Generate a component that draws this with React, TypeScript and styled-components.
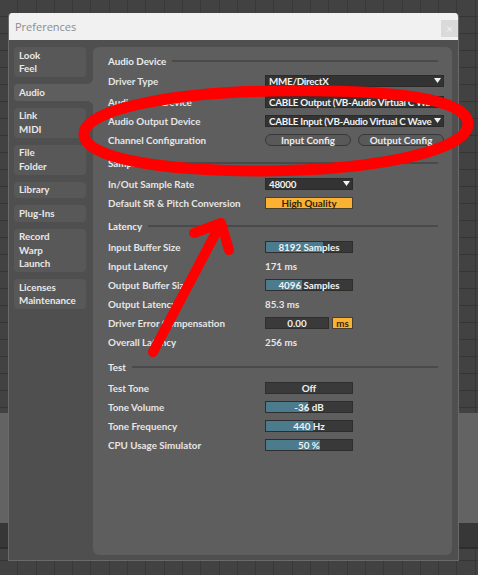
import React from "react";
import styled, { createGlobalStyle } from "styled-components";

const GlobalStyle = createGlobalStyle`
  html, body {
    margin: 0;
    padding: 0;
    background: #414141;
  }
  body {
    font-family: Lato, "DejaVu Sans", sans-serif;
  }
`;

const Desktop = styled.div`
  position: relative;
  width: 478px;
  height: 575px;
  overflow: hidden;
  box-sizing: border-box;
  padding: 13px 0 0 8px;
  background-color: #424242;
  background-image:
    linear-gradient(
      to bottom,
      transparent 413px,
      #636363 413px,
      #636363 523px,
      #373737 523px,
      #373737 547px,
      #2d2d2d 547px,
      #2d2d2d 549px,
      transparent 549px
    ),
    repeating-linear-gradient(to bottom, transparent 0 16px, #353535 16px 17px),
    repeating-linear-gradient(to right, transparent 0 17.3px, #383838 17.3px 18.3px);
`;

const Window = styled.div`
  width: 451px;
  height: 548px;
  box-sizing: border-box;
  display: flex;
  flex-direction: column;
  background: #4f4f4f;
  border: 1px solid #6a6a6a;
  border-top: none;
  border-radius: 4px 4px 0 0;
  overflow: hidden;
`;

const TitleBar = styled.div`
  height: 27px;
  flex: none;
  display: flex;
  align-items: flex-start;
  justify-content: space-between;
  background: #f1f1f1;
  padding-left: 6px;
`;

const Title = styled.span`
  margin-top: 6px;
  font-family: "Open Sans", "Liberation Sans", sans-serif;
  font-size: 11px;
  color: #8d8d8d;
`;

const CloseButton = styled.div`
  margin-top: 7px;
  width: 17px;
  height: 17px;
  display: flex;
  align-items: center;
  justify-content: center;
  background: #dadada;
  color: #f4f4f4;
  font-family: "DejaVu Sans", sans-serif;
  font-size: 9px;
`;

const Body = styled.div`
  flex: 1;
  display: flex;
  gap: 7px;
  padding: 7px 6px 5px 5px;
  min-height: 0;
`;

const Sidebar = styled.div`
  width: 72px;
  flex: none;
  display: flex;
  flex-direction: column;
  gap: 7px;
`;

const Tab = styled.div<{ $active?: boolean }>`
  position: relative;
  padding: 1.5px 5px;
  line-height: 13.5px;
  font-size: 9.8px;
  font-weight: 700;
  color: #e8e8e8;
  background: ${(p) => (p.$active ? "#5e5e5e" : "#585858")};
  border-radius: ${(p) => (p.$active ? "4px 0 0 4px" : "4px")};
  margin-right: ${(p) => (p.$active ? "-7px" : "0")};

  ${(p) =>
    p.$active &&
    `
    &::before, &::after {
      content: "";
      position: absolute;
      right: 0;
      width: 5px;
      height: 5px;
    }
    &::before {
      top: -5px;
      background: radial-gradient(circle at 0 0, transparent 4.5px, #5e5e5e 5px);
    }
    &::after {
      bottom: -5px;
      background: radial-gradient(circle at 0 100%, transparent 4.5px, #5e5e5e 5px);
    }
  `}
`;

const Panel = styled.div`
  flex: 1;
  display: flex;
  flex-direction: column;
  gap: 2px;
  background: #5e5e5e;
  border-radius: 6px;
  padding: 4px 8px 0 15px;
`;

const Section = styled.div<{ $extra?: number }>`
  display: flex;
  flex-direction: column;
  margin-top: ${(p) => p.$extra ?? 0}px;
`;

const SectionTitle = styled.div<{ $compact?: boolean }>`
  height: ${(p) => (p.$compact ? 20 : 23)}px;
  display: flex;
  align-items: center;
  gap: 6px;
  font-size: 9.8px;
  font-weight: 700;
  color: #ececec;

  &::after {
    content: "";
    flex: 1;
    height: 2px;
    margin-right: 6px;
    background: #4a4a4a;
  }
`;

const Row = styled.div<{ $spaced?: boolean }>`
  height: 19px;
  display: grid;
  grid-template-columns: 157px 1fr;
  align-items: center;
  margin-bottom: ${(p) => (p.$spaced ? 2 : 0)}px;
`;

const Label = styled.span`
  font-size: 9.8px;
  font-weight: 700;
  color: #e6e6e6;
  white-space: nowrap;
`;

const Controls = styled.div<{ $gap?: number }>`
  display: flex;
  gap: ${(p) => p.$gap ?? 7}px;
  align-items: center;
`;

const Select = styled.div<{ $width: number }>`
  width: ${(p) => p.$width}px;
  height: 12px;
  box-sizing: border-box;
  display: flex;
  align-items: center;
  gap: 2px;
  padding: 0 2px 0 3px;
  background: #333333;
  border: 1px solid #2b2b2b;
  font-size: 9.8px;
  font-weight: 700;
  color: #f2f2f2;
`;

const SelectText = styled.span`
  flex: 1;
  overflow: hidden;
  white-space: nowrap;
  letter-spacing: -0.25px;
`;

const Pill = styled.div`
  width: 86px;
  height: 12px;
  box-sizing: border-box;
  display: flex;
  align-items: center;
  justify-content: center;
  border: 1px solid #383838;
  border-radius: 6px;
  background: #595959;
  font-size: 9.8px;
  font-weight: 700;
  color: #ececec;
`;

const Field = styled.div<{ $width: number; $orange?: boolean }>`
  width: ${(p) => p.$width}px;
  height: 12px;
  box-sizing: border-box;
  display: flex;
  align-items: center;
  justify-content: center;
  border: 1px solid ${(p) => (p.$orange ? "#4a4030" : "#2e2e2e")};
  background: ${(p) => (p.$orange ? "#fbb131" : "#3a3a3a")};
  font-size: 9.8px;
  font-weight: 700;
  color: ${(p) => (p.$orange ? "#33260e" : "#f0f0f0")};
`;

const Slider = styled.div`
  width: 88px;
  height: 12px;
  box-sizing: border-box;
  display: flex;
  align-items: center;
  justify-content: center;
  border: 1px solid #2e2e2e;
  font-size: 9.8px;
  font-weight: 700;
  color: #f2f2f2;
`;

const Value = styled.span`
  font-size: 9.8px;
  font-weight: 700;
  color: #e6e6e6;
`;

const Annotation = styled.svg`
  position: absolute;
  left: 0;
  top: 0;
  pointer-events: none;
`;

const Arrow = () => (
  <svg width="7" height="5" viewBox="0 0 7 5">
    <path d="M0 0 H7 L3.5 5 Z" fill="#f4f4f4" />
  </svg>
);

const Dropdown: React.FC<{ width: number; text: string }> = ({ width, text }) => (
  <Select $width={width}>
    <SelectText>{text}</SelectText>
    <Arrow />
  </Select>
);

const Bar: React.FC<{ value: number; text: string }> = ({ value, text }) => (
  <Slider
    style={{
      background: `linear-gradient(to right, #4b7b8d ${value * 100}%, #393939 ${value * 100}%)`,
    }}
  >
    {text}
  </Slider>
);

const tabs: { lines: string[]; active?: boolean }[] = [
  { lines: ["Look", "Feel"] },
  { lines: ["Audio"], active: true },
  { lines: ["Link", "MIDI"] },
  { lines: ["File", "Folder"] },
  { lines: ["Library"] },
  { lines: ["Plug-Ins"] },
  { lines: ["Record", "Warp", "Launch"] },
  { lines: ["Licenses", "Maintenance"] },
];

export default function App() {
  return (
    <>
      <GlobalStyle />
      <Desktop>
        <Window>
          <TitleBar>
            <Title>Preferences</Title>
            <CloseButton>×</CloseButton>
          </TitleBar>
          <Body>
            <Sidebar>
              {tabs.map((t) => (
                <Tab key={t.lines[0]} $active={t.active}>
                  {t.lines.map((l) => (
                    <div key={l}>{l}</div>
                  ))}
                </Tab>
              ))}
            </Sidebar>
            <Panel>
              <Section>
                <SectionTitle $compact>Audio Device</SectionTitle>
                <Row $spaced>
                  <Label>Driver Type</Label>
                  <Dropdown width={179} text="MME/DirectX" />
                </Row>
                <Row>
                  <Label>Audio Input Device</Label>
                  <Dropdown width={179} text="CABLE Output (VB-Audio Virtual C Wa" />
                </Row>
                <Row>
                  <Label>Audio Output Device</Label>
                  <Dropdown width={179} text="CABLE Input (VB-Audio Virtual C Wave" />
                </Row>
                <Row>
                  <Label>Channel Configuration</Label>
                  <Controls>
                    <Pill>Input Config</Pill>
                    <Pill>Output Config</Pill>
                  </Controls>
                </Row>
              </Section>

              <Section>
                <SectionTitle>Sample Rate</SectionTitle>
                <Row>
                  <Label>In/Out Sample Rate</Label>
                  <Dropdown width={88} text="48000" />
                </Row>
                <Row>
                  <Label>Default SR &amp; Pitch Conversion</Label>
                  <Field $width={88} $orange>
                    High Quality
                  </Field>
                </Row>
              </Section>

              <Section>
                <SectionTitle>Latency</SectionTitle>
                <Row>
                  <Label>Input Buffer Size</Label>
                  <Bar value={0.66} text="8192 Samples" />
                </Row>
                <Row>
                  <Label>Input Latency</Label>
                  <Value>171 ms</Value>
                </Row>
                <Row>
                  <Label>Output Buffer Size</Label>
                  <Bar value={0.42} text="4096 Samples" />
                </Row>
                <Row>
                  <Label>Output Latency</Label>
                  <Value>85.3 ms</Value>
                </Row>
                <Row>
                  <Label>Driver Error Compensation</Label>
                  <Controls $gap={3}>
                    <Field $width={64}>0.00</Field>
                    <Field $width={21} $orange>
                      ms
                    </Field>
                  </Controls>
                </Row>
                <Row>
                  <Label>Overall Latency</Label>
                  <Value>256 ms</Value>
                </Row>
              </Section>

              <Section $extra={2}>
                <SectionTitle>Test</SectionTitle>
                <Row>
                  <Label>Test Tone</Label>
                  <Field $width={88}>Off</Field>
                </Row>
                <Row>
                  <Label>Tone Volume</Label>
                  <Bar value={0.49} text="-36 dB" />
                </Row>
                <Row>
                  <Label>Tone Frequency</Label>
                  <Bar value={0.55} text="440 Hz" />
                </Row>
                <Row>
                  <Label>CPU Usage Simulator</Label>
                  <Bar value={0.625} text="50 %" />
                </Row>
              </Section>
            </Panel>
          </Body>
        </Window>

        <Annotation width="478" height="575" viewBox="0 0 478 575">
          <path
            d="M84 134 C84 108 180 92 275 91 C390 89 468 98 468 124 C468 150 380 170 265 171 C170 171 84 160 84 134 Z"
            fill="none"
            stroke="#ff0000"
            strokeWidth="11"
          />
          <path
            d="M153 352 L221 223 M194 233 L221 223 L229 250"
            fill="none"
            stroke="#ff0000"
            strokeWidth="10"
            strokeLinecap="round"
            strokeLinejoin="round"
          />
        </Annotation>
      </Desktop>
    </>
  );
}
